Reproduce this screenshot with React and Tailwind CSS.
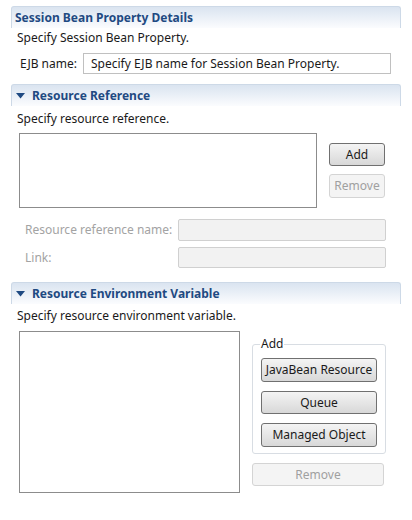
const font = { fontFamily: "'Noto Sans', 'Open Sans', sans-serif" };

function SectionHeader({ title, arrow }) {
  return (
    <div className="mx-[11px] flex h-[22px] items-center rounded-t-[3px] border border-b-0 border-[#cdd9e7] bg-gradient-to-b from-[#dae4f0] to-[#fbfcfe] pl-[3px]">
      {arrow && (
        <svg width="9" height="6" viewBox="0 0 9 6" className="ml-[1px] mr-[7px]">
          <path d="M0 0 H9 L4.5 5.5 Z" fill="#1f4a82" />
        </svg>
      )}
      <span className="text-[12px] font-bold text-[#1f4a82]">{title}</span>
    </div>
  );
}

function Button({ children, disabled, className = "" }) {
  return (
    <div
      className={`flex items-center justify-center rounded-[3px] border text-[12px] ${
        disabled
          ? "border-[#d4d4d4] bg-[#f4f4f4] text-[#a0a0a0]"
          : "border-[#707070] bg-gradient-to-b from-[#f4f4f4] to-[#d8d8d8] text-[#1a1a1a]"
      } ${className}`}
    >
      {children}
    </div>
  );
}

export default function App() {
  return (
    <div className="h-[520px] w-[412px] bg-white text-[12px] text-[#1a1a1a]" style={font}>
      <div className="pt-[6px]">
        <SectionHeader title="Session Bean Property Details" />
        <div className="ml-[17px] mt-[1px] leading-[18px]">Specify Session Bean Property.</div>
        <div className="mt-[6px] flex items-center">
          <span className="ml-[20px] w-[63px]">EJB name:</span>
          <div className="flex h-[21px] w-[308px] items-center border border-[#c0c0c0] pl-[7px]">
            Specify EJB name for Session Bean Property.
          </div>
        </div>
      </div>

      <div className="mt-[10px]">
        <SectionHeader title="Resource Reference" arrow />
        <div className="ml-[17px] mt-[4px] leading-[18px]">Specify resource reference.</div>
        <div className="mt-[5px] flex">
          <div className="ml-[19px] h-[75px] w-[298px] border border-[#8c8c8c]" />
          <div className="ml-[12px] mt-[10px] flex flex-col gap-[8px]">
            <Button className="h-[23px] w-[56px]">Add</Button>
            <Button disabled className="h-[24px] w-[56px]">Remove</Button>
          </div>
        </div>
        <div className="mt-[11px] flex items-center text-[#a3a3a3]">
          <span className="ml-[25px] w-[153px]">Resource reference name:</span>
          <div className="h-[22px] w-[208px] rounded-[2px] border border-[#d0d0d0] bg-[#f2f2f2]" />
        </div>
        <div className="mt-[6px] flex items-center text-[#a3a3a3]">
          <span className="ml-[25px] w-[153px]">Link:</span>
          <div className="h-[21px] w-[208px] rounded-[2px] border border-[#d0d0d0] bg-[#f2f2f2]" />
        </div>
      </div>

      <div className="mt-[14px]">
        <SectionHeader title="Resource Environment Variable" arrow />
        <div className="ml-[17px] mt-[3px] leading-[18px]">Specify resource environment variable.</div>
        <div className="mt-[6px] flex">
          <div className="ml-[19px] h-[162px] w-[221px] border border-[#8c8c8c]" />
          <div className="ml-[12px] flex flex-col">
            <div className="relative mt-[13px] h-[110px] w-[134px] rounded-[3px] border border-[#d8dde3] px-[8px] pt-[13px]">
              <span className="absolute left-[7px] top-[-9px] bg-white px-[1px] leading-[16px]">Add</span>
              <div className="flex flex-col gap-[9px]">
                <Button className="h-[24px] w-[116px]">JavaBean Resource</Button>
                <Button className="h-[23px] w-[116px]">Queue</Button>
                <Button className="h-[24px] w-[116px]">Managed Object</Button>
              </div>
            </div>
            <Button disabled className="mt-[9px] h-[23px] w-[132px]">Remove</Button>
          </div>
        </div>
      </div>
    </div>
  );
}
